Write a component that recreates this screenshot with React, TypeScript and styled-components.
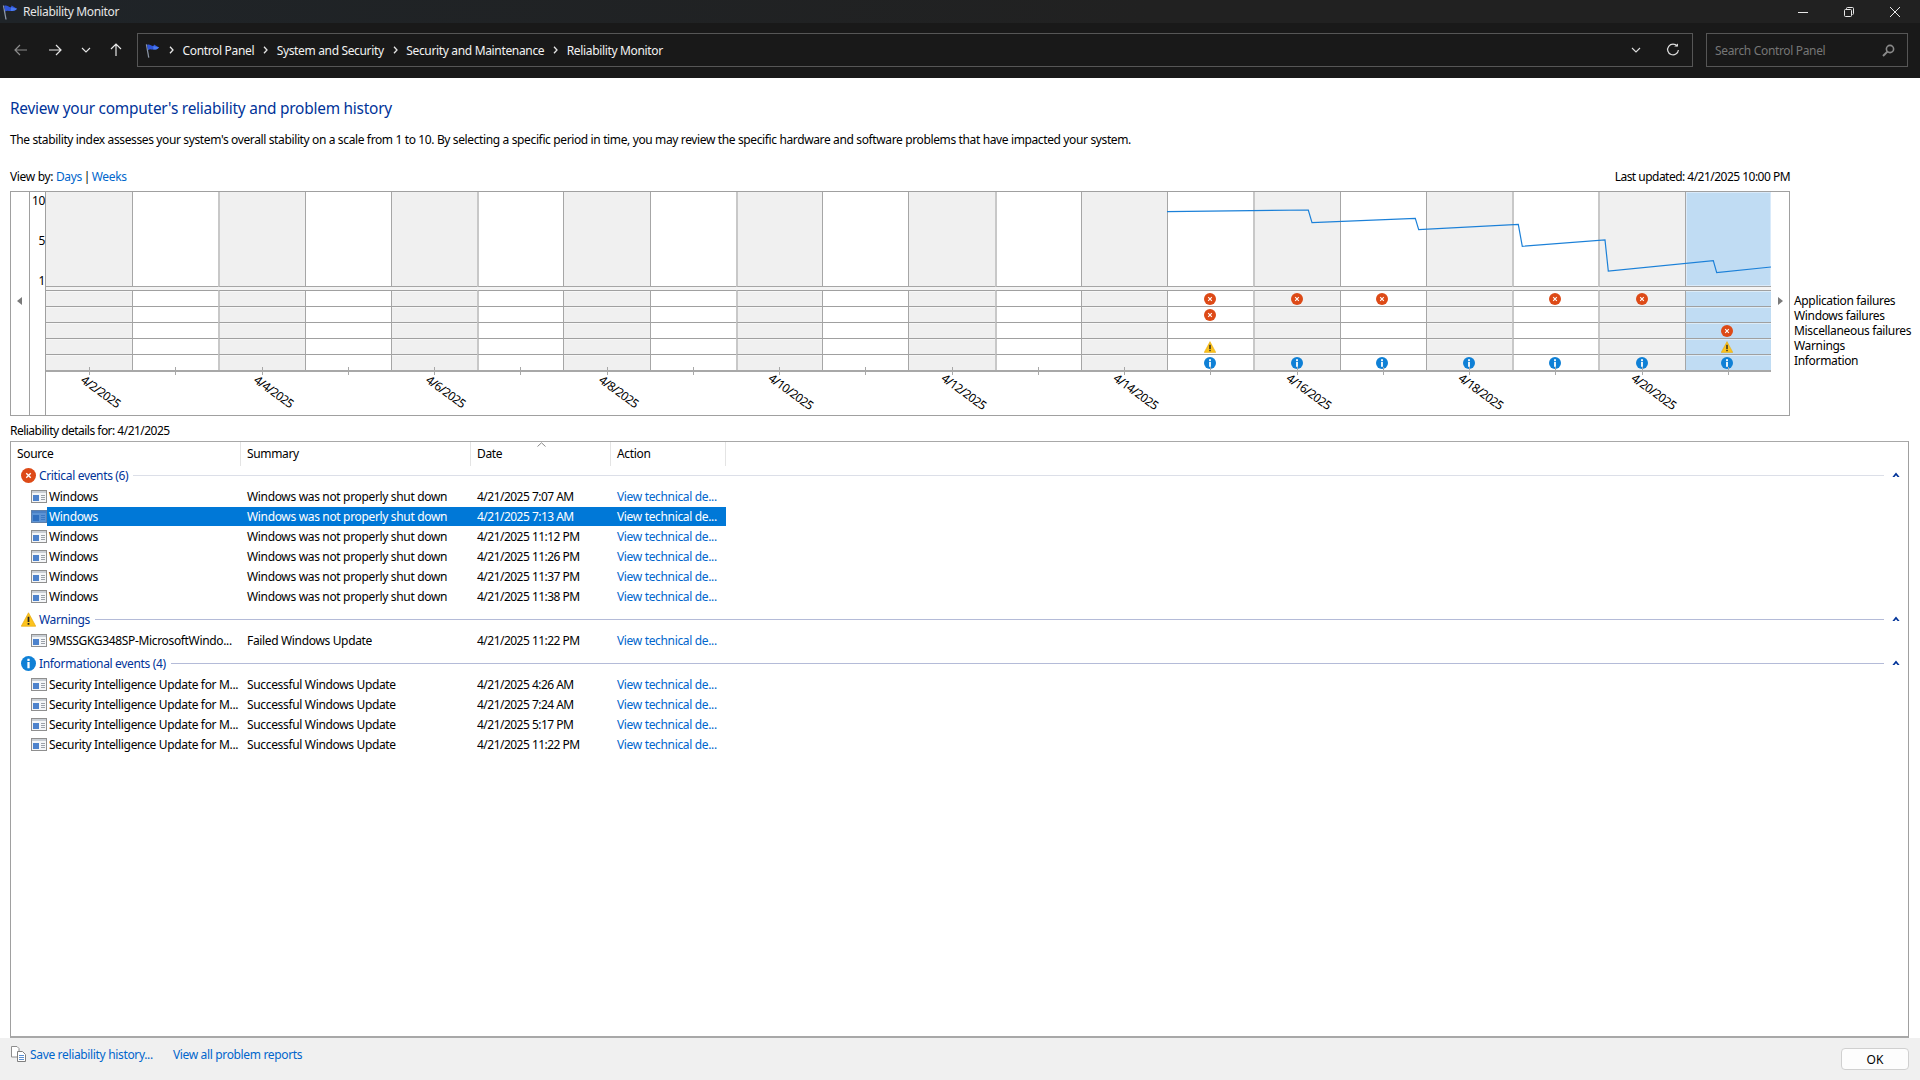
import React from 'react'
import styled, { createGlobalStyle } from 'styled-components'

const GlobalStyle = createGlobalStyle`
	html, body {
		margin: 0;
		padding: 0;
		height: 100%;
		background: #fff;
	}
	body {
		font-family: 'Noto Sans', 'Open Sans', sans-serif;
		font-size: 12px;
		letter-spacing: -0.34px;
		color: #000;
		overflow: hidden;
	}
	* {
		box-sizing: border-box;
	}
`

const Window = styled.div`
	width: 1920px;
	height: 1080px;
	display: flex;
	flex-direction: column;
`

// Тёмная шапка окна
const TitleBar = styled.div`
	height: 23px;
	display: flex;
	align-items: center;
	padding-left: 2px;
	background: linear-gradient(90deg, #1f2428, #212121 60%);
	color: #e6e6e6;
`

const TitleText = styled.span`
	margin-left: 5px;
	flex: 1;
`

const WindowButton = styled.div`
	width: 46px;
	height: 23px;
	display: flex;
	align-items: center;
	justify-content: center;
	color: #e8e8e8;
	&:last-child {
		margin-right: 2px;
	}
`

const Toolbar = styled.div`
	height: 55px;
	display: flex;
	align-items: center;
	padding: 0 12px 1px 4px;
	background: #191919;
	color: #eee;
`

const NavButton = styled.div<{ $width: number; $dim?: boolean }>`
	width: ${(p) => p.$width}px;
	display: flex;
	justify-content: center;
	color: ${(p) => (p.$dim ? '#8c8c8c' : '#e6e6e6')};
`

const AddressBar = styled.div`
	flex: 1;
	height: 34px;
	margin-left: 6px;
	padding-left: 7px;
	display: flex;
	align-items: center;
	border: 1px solid #565656;
	color: #f2f2f2;
`

const CrumbSeparator = styled.span`
	width: 22.5px;
	display: flex;
	justify-content: center;
`

const AddressTools = styled.div`
	margin-left: auto;
	display: flex;
	align-items: center;
`

const AddressTool = styled.div<{ $width: number }>`
	width: ${(p) => p.$width}px;
	display: flex;
	justify-content: center;
	color: #ddd;
`

const SearchBox = styled.div`
	width: 202px;
	height: 34px;
	margin-left: 13px;
	padding: 0 12px 0 8px;
	display: flex;
	align-items: center;
	justify-content: space-between;
	border: 1px solid #565656;
	color: #767676;
`

const Main = styled.main`
	flex: 1;
	min-height: 0;
	display: flex;
	flex-direction: column;
	padding: 0 11px 0 10px;
`

const Heading = styled.h1`
	margin: 21px 0 0;
	height: 20px;
	line-height: 20px;
	font-size: 15.4px;
	font-weight: 400;
	letter-spacing: -0.22px;
	color: #003399;
`

const Description = styled.p`
	margin: 12px 0 0;
	height: 18px;
	line-height: 18px;
	letter-spacing: -0.37px;
`

const ViewRow = styled.div`
	margin-top: 19px;
	width: 1780px;
	height: 18px;
	line-height: 18px;
	display: flex;
	justify-content: space-between;
`

const Link = styled.span`
	color: #0066cc;
`

const ViewSeparator = styled.span`
	margin: 0 -1px;
`

const DateText = styled.span`
	letter-spacing: -0.52px;
`

const ChartRow = styled.div`
	margin-top: 5px;
	display: flex;
`

const ChartFrame = styled.div`
	width: 1780px;
	height: 225px;
	display: flex;
	border: 1px solid #a0a0a0;
`

const ScrollColumn = styled.div<{ $side: 'left' | 'right' }>`
	width: ${(p) => (p.$side === 'left' ? 19 : 18)}px;
	display: flex;
	align-items: flex-start;
	justify-content: center;
	padding-top: 105px;
	color: #7a7a7a;
	${(p) => (p.$side === 'left' ? 'border-right: 1px solid #a0a0a0;' : 'padding-left: 1px;')}
`

const ScaleColumn = styled.div`
	width: 16px;
	height: 94px;
	margin-top: 2px;
	display: flex;
	flex-direction: column;
	justify-content: space-between;
	align-items: flex-end;
	padding-right: 1px;
	line-height: 14px;
`

const ScaleWrap = styled.div`
	width: 16px;
	border-right: 1px solid #a0a0a0;
`

const Plot = styled.div`
	position: relative;
	width: 1726px;
	display: grid;
	grid-template-columns: repeat(20, 1fr);
`

const DayColumn = styled.div`
	display: flex;
	flex-direction: column;
	&:first-child > * {
		border-left: none;
	}
	&:last-child > * {
		border-right: 1px solid #a0a0a0;
	}
`

const StabilityCell = styled.div<{ $tone: string; $wide: boolean }>`
	height: 95px;
	background: ${(p) => p.$tone};
	border-bottom: 1px solid #a6a6a6;
	border-left: ${(p) => (p.$wide ? '2px solid #c8c8c8' : '1px solid #a6a6a6')};
`

const SelectedFill = styled.div`
	height: 100%;
	box-shadow: inset 0 0 0 1px #d9eafa;
`

const MarkerGap = styled.div`
	height: 3px;
	background: #f4f4f4;
`

const MarkerCell = styled.div<{ $tone: string; $wide: boolean }>`
	height: 16px;
	padding-right: 2px;
	display: flex;
	align-items: center;
	justify-content: center;
	background: ${(p) => p.$tone};
	border-top: 1px solid #a0a0a0;
	border-left: ${(p) => (p.$wide ? '2px solid #c8c8c8' : '1px solid #a6a6a6')};
	box-shadow: inset 0 1px 0 rgba(255, 255, 255, 0.45);
`

const AxisCell = styled.div`
	position: relative;
	flex: 1;
	border-top: 2px solid #a8a8a8;
`

const AxisTick = styled.span`
	position: absolute;
	left: 50%;
	top: -5px;
	width: 1px;
	height: 8px;
	background: #a8a8a8;
`

const AxisLabel = styled.span`
	position: absolute;
	left: 50%;
	top: 11px;
	margin-left: 12px;
	white-space: nowrap;
	letter-spacing: -0.6px;
	transform: translateX(-50%) rotate(36deg);
`

const StabilityLine = styled.svg`
	position: absolute;
	left: 0;
	top: 0;
	pointer-events: none;
`

const Legend = styled.ul`
	margin: 102px 0 0 4px;
	padding: 0;
	list-style: none;
	line-height: 15px;
	white-space: nowrap;
`

const DetailsTitle = styled.div`
	margin-top: 6px;
	height: 18px;
	line-height: 18px;
`

const DetailsPanel = styled.section`
	margin-top: 1px;
	flex: 1;
	min-height: 0;
	border: 1px solid #a0a0a0;
	border-top-color: #a8a8a8;
	border-bottom: 2px solid #a8a8a8;
`

const ColumnsHeader = styled.div`
	position: relative;
	height: 24px;
	display: grid;
	grid-template-columns: 230px 230px 140px 115px;
	width: 715px;
`

const HeaderCell = styled.div`
	height: 24px;
	line-height: 24px;
	padding-left: 6px;
	border-right: 1px solid #e4e4e4;
`

const SortCaret = styled.svg`
	position: absolute;
	left: 526px;
	top: 0;
`

const Group = styled.div`
	& + & {
		margin-top: 4px;
	}
`

const GroupHeader = styled.div`
	height: 18px;
	margin-bottom: 2px;
	padding: 0 8px 0 10px;
	display: flex;
	align-items: center;
	color: #003399;
`

const GroupName = styled.span`
	margin-left: 3px;
	white-space: nowrap;
`

const GroupRule = styled.span<{ $light?: boolean }>`
	flex: 1;
	height: 1px;
	margin: 0 8px 0 5px;
	background: ${(p) => (p.$light ? '#dcdfe8' : '#b4bbd8')};
`

const EventRow = styled.div`
	height: 20px;
	display: flex;
`

const RowIcon = styled.div`
	width: 36px;
	padding: 4px 0 0 20px;
	line-height: 0;
`

const RowBody = styled.div<{ $selected?: boolean }>`
	width: 679px;
	height: 19px;
	margin-top: 1px;
	line-height: 19px;
	display: grid;
	grid-template-columns: 194px 230px 140px 115px;
	white-space: nowrap;
	background: ${(p) => (p.$selected ? '#0078d7' : 'transparent')};
	color: ${(p) => (p.$selected ? '#fff' : '#000')};
`

const SourceCell = styled.div`
	padding-left: 2px;
`

const TextCell = styled.div`
	padding-left: 6px;
`

const ActionCell = styled.div<{ $selected?: boolean }>`
	padding-left: 6px;
	color: ${(p) => (p.$selected ? '#fff' : '#0066cc')};
`

const Footer = styled.footer`
	height: 42px;
	display: flex;
	align-items: flex-start;
	padding: 8px 11px 0 11px;
	background: #f0f0f0;
`

const FooterLink = styled(Link)<{ $gap: number }>`
	margin-left: ${(p) => p.$gap}px;
	line-height: 18px;
`

const OkButton = styled.button`
	width: 68px;
	height: 22px;
	margin: 2px 0 0 auto;
	padding: 0;
	border: 1px solid #d0d0d0;
	border-radius: 4px;
	background: #fdfdfd;
	font: inherit;
	color: #000;
`

const FlagIcon = ({ size = 16 }: { size?: number }) => (
	<svg width={size} height={size} viewBox="0 0 16 16">
		<path d="M1.5 1.5 L4 15.5" stroke="#8d98a8" strokeWidth="1.3" fill="none" />
		<path d="M2.2 2 C5 0.5 7 3.8 9 3.2 L9.6 1.6 L15 4.8 C12.6 7.6 10.5 6.8 8.8 7 C6.8 7.2 5 6 3.2 7.6 Z" fill="#2f55d8" />
		<path d="M9 3.2 L8.8 7 C10.5 6.8 12.6 7.6 15 4.8 Z" fill="#4a7bf0" />
	</svg>
)

const ArrowIcon = ({ dir }: { dir: 'left' | 'right' | 'up' }) => {
	const rotate = dir === 'left' ? 180 : dir === 'up' ? -90 : 0
	return (
		<svg width="14" height="14" viewBox="0 0 14 14" style={{ transform: `rotate(${rotate}deg)` }}>
			<path d="M1 7 H13 M8 2 L13 7 L8 12" stroke="currentColor" strokeWidth="1.2" fill="none" />
		</svg>
	)
}

const ChevronDown = () => (
	<svg width="10" height="6" viewBox="0 0 10 6">
		<path d="M1 1 L5 5 L9 1" stroke="currentColor" strokeWidth="1.1" fill="none" />
	</svg>
)

const ChevronRight = () => (
	<svg width="5" height="8" viewBox="0 0 5 8">
		<path d="M1 0.8 L4 4 L1 7.2" stroke="#e6e6e6" strokeWidth="1.3" fill="none" />
	</svg>
)

const RefreshIcon = () => (
	<svg width="14" height="14" viewBox="0 0 14 14">
		<path d="M11.3 3.2 A5.4 5.4 0 1 0 12.4 7" stroke="currentColor" strokeWidth="1.2" fill="none" />
		<path d="M8.2 3.6 H12 V0.4 Z" fill="currentColor" />
	</svg>
)

const SearchIcon = () => (
	<svg width="13" height="13" viewBox="0 0 13 13">
		<circle cx="8" cy="5" r="3.6" stroke="#8a8a8a" strokeWidth="1.6" fill="none" />
		<path d="M5.4 7.6 L1 12" stroke="#8a8a8a" strokeWidth="2" />
	</svg>
)

const MinimizeIcon = () => (
	<svg width="10" height="10" viewBox="0 0 10 10">
		<path d="M0 5.5 H10" stroke="currentColor" strokeWidth="1" />
	</svg>
)

const RestoreIcon = () => (
	<svg width="10" height="10" viewBox="0 0 10 10">
		<rect x="0.5" y="2.5" width="7" height="7" rx="1" stroke="currentColor" fill="none" />
		<path d="M2.5 2.5 V1.5 Q2.5 0.5 3.5 0.5 H8.5 Q9.5 0.5 9.5 1.5 V6.5 Q9.5 7.5 8.5 7.5" stroke="currentColor" fill="none" />
	</svg>
)

const CloseIcon = () => (
	<svg width="10" height="10" viewBox="0 0 10 10">
		<path d="M0 0 L10 10 M10 0 L0 10" stroke="currentColor" strokeWidth="1" />
	</svg>
)

const ErrorIcon = ({ size = 12 }: { size?: number }) => (
	<svg width={size} height={size} viewBox="0 0 12 12">
		<circle cx="6" cy="6" r="6" fill="#dd4a17" />
		<path d="M4.2 4.2 L7.8 7.8 M7.8 4.2 L4.2 7.8" stroke="#fff" strokeWidth="1.1" />
	</svg>
)

const WarningIcon = ({ size = 12 }: { size?: number }) => (
	<svg width={size} height={size} viewBox="0 0 12 12">
		<path d="M6 0.6 L11.8 11.4 H0.2 Z" fill="#fcc31e" stroke="#e6a400" strokeWidth="0.5" strokeLinejoin="round" />
		<rect x="5.3" y="3.8" width="1.4" height="4.2" fill="#222" />
		<rect x="5.3" y="8.8" width="1.4" height="1.4" fill="#222" />
	</svg>
)

const InfoIcon = ({ size = 12 }: { size?: number }) => (
	<svg width={size} height={size} viewBox="0 0 12 12">
		<circle cx="6" cy="6" r="6" fill="#0f80d6" />
		<rect x="5.1" y="4.8" width="1.8" height="5" fill="#fff" />
		<rect x="5.1" y="2.2" width="1.8" height="1.8" fill="#fff" />
	</svg>
)

const ListItemIcon = ({ selected }: { selected?: boolean }) => (
	<svg width="16" height="13" viewBox="0 0 16 13">
		<rect x="0.5" y="0.5" width="15" height="12" fill={selected ? '#5c93d4' : '#f4f6f8'} stroke={selected ? '#5f7fa8' : '#8f8f8f'} />
		<rect x="1" y="1" width="14" height="2" fill={selected ? '#4a80c4' : '#c9ced4'} />
		<rect x="2" y="5" width="6" height="6" fill={selected ? '#2f6fc0' : '#4d82cc'} />
		<path d="M10 5.5 H14 M10 7.5 H14 M10 9.5 H14" stroke={selected ? '#3c78c4' : '#9aa0a8'} />
	</svg>
)

const CopyIcon = () => (
	<svg width="15" height="16" viewBox="0 0 15 16">
		<path d="M0.5 0.5 H6 L8 2.5 V11 H0.5 Z" fill="#fff" stroke="#8e8e8e" />
		<path d="M6.5 5.5 H11.5 L14.5 8.5 V15.5 H6.5 Z" fill="#fff" stroke="#7f7f7f" />
		<path d="M8 9.5 H13 M8 11.5 H13 M8 13.5 H13" stroke="#5b8fd0" />
	</svg>
)

const CollapseCaret = () => (
	<svg width="8" height="6" viewBox="0 0 8 6">
		<path d="M4 0.5 L7.6 5 H5.6 L4 3.2 L2.4 5 H0.4 Z" fill="#003399" />
	</svg>
)

const TriangleLeft = () => (
	<svg width="5" height="8" viewBox="0 0 5 8">
		<path d="M5 0 V8 L0 4 Z" fill="currentColor" />
	</svg>
)

const TriangleRight = () => (
	<svg width="5" height="8" viewBox="0 0 5 8">
		<path d="M0 0 V8 L5 4 Z" fill="currentColor" />
	</svg>
)

type Marker = 'error' | 'warning' | 'info' | null

// Отметки по строкам: индекс дня -> тип значка
const markerRows: Record<number, Marker>[] = [
	{ 13: 'error', 14: 'error', 15: 'error', 17: 'error', 18: 'error' },
	{ 13: 'error' },
	{ 19: 'error' },
	{ 13: 'warning', 19: 'warning' },
	{ 13: 'info', 14: 'info', 15: 'info', 16: 'info', 17: 'info', 18: 'info', 19: 'info' },
]

const days = Array.from({ length: 20 }, (_, i) => i)

const linePoints = [
	[1167, 211.7],
	[1308.3, 210],
	[1312, 222.7],
	[1415.3, 218.3],
	[1418.7, 229.7],
	[1518.3, 224.3],
	[1522.3, 246.3],
	[1605, 240],
	[1608.3, 271],
	[1713.3, 260.7],
	[1716.7, 272.7],
	[1771, 267],
]

const markerIcon = (type: Marker) => {
	if (type === 'error') return <ErrorIcon />
	if (type === 'warning') return <WarningIcon />
	if (type === 'info') return <InfoIcon />
	return null
}

const toneOf = (day: number) => (day === 19 ? '#c0dcf3' : day % 2 === 0 ? '#f0f0f0' : '#fff')

const criticalTimes = ['7:07 AM', '7:13 AM', '11:12 PM', '11:26 PM', '11:37 PM', '11:38 PM']
const infoTimes = ['4:26 AM', '7:24 AM', '5:17 PM', '11:22 PM']

interface EventItem {
	source: string
	summary: string
	date: string
	selected?: boolean
}

const groups: { name: string; icon: React.ReactNode; light?: boolean; items: EventItem[] }[] = [
	{
		name: 'Critical events (6)',
		icon: <ErrorIcon size={15} />,
		light: true,
		items: criticalTimes.map((t, i) => ({
			source: 'Windows',
			summary: 'Windows was not properly shut down',
			date: `4/21/2025 ${t}`,
			selected: i === 1,
		})),
	},
	{
		name: 'Warnings',
		icon: <WarningIcon size={15} />,
		items: [{ source: '9MSSGKG348SP-MicrosoftWindo...', summary: 'Failed Windows Update', date: '4/21/2025 11:22 PM' }],
	},
	{
		name: 'Informational events (4)',
		icon: <InfoIcon size={15} />,
		items: infoTimes.map((t) => ({
			source: 'Security Intelligence Update for M...',
			summary: 'Successful Windows Update',
			date: `4/21/2025 ${t}`,
		})),
	},
]

const crumbs = ['Control Panel', 'System and Security', 'Security and Maintenance', 'Reliability Monitor']

const Chart = () => (
	<ChartFrame>
		<ScrollColumn $side="left">
			<TriangleLeft />
		</ScrollColumn>
		<ScaleWrap>
			<ScaleColumn>
				<span>10</span>
				<span>5</span>
				<span>1</span>
			</ScaleColumn>
		</ScaleWrap>
		<Plot>
			{days.map((day) => {
				const wide = day % 3 === 2 || day === 18
				return (
					<DayColumn key={day}>
						<StabilityCell $tone={toneOf(day)} $wide={wide}>
							{day === 19 && <SelectedFill />}
						</StabilityCell>
						<MarkerGap />
						{markerRows.map((row, r) => (
							<MarkerCell key={r} $tone={toneOf(day)} $wide={wide}>
								{markerIcon(row[day] ?? null)}
							</MarkerCell>
						))}
						<AxisCell>
							<AxisTick />
							{day % 2 === 0 && day < 19 && <AxisLabel>4/{day + 2}/2025</AxisLabel>}
						</AxisCell>
					</DayColumn>
				)
			})}
			<StabilityLine width="1726" height="100" viewBox="46 192 1726 100">
				<polyline
					points={linePoints.map((p) => p.join(',')).join(' ')}
					fill="none"
					stroke="#1b80d8"
					strokeWidth="1.2"
				/>
			</StabilityLine>
		</Plot>
		<ScrollColumn $side="right">
			<TriangleRight />
		</ScrollColumn>
	</ChartFrame>
)

const App = () => (
	<Window>
		<GlobalStyle />
		<TitleBar>
			<FlagIcon />
			<TitleText>Reliability Monitor</TitleText>
			<WindowButton>
				<MinimizeIcon />
			</WindowButton>
			<WindowButton>
				<RestoreIcon />
			</WindowButton>
			<WindowButton>
				<CloseIcon />
			</WindowButton>
		</TitleBar>
		<Toolbar>
			<NavButton $width={34} $dim>
				<ArrowIcon dir="left" />
			</NavButton>
			<NavButton $width={34}>
				<ArrowIcon dir="right" />
			</NavButton>
			<NavButton $width={28}>
				<ChevronDown />
			</NavButton>
			<NavButton $width={31}>
				<ArrowIcon dir="up" />
			</NavButton>
			<AddressBar>
				<FlagIcon size={15} />
				{crumbs.map((crumb) => (
					<React.Fragment key={crumb}>
						<CrumbSeparator>
							<ChevronRight />
						</CrumbSeparator>
						<span>{crumb}</span>
					</React.Fragment>
				))}
				<AddressTools>
					<AddressTool $width={36}>
						<ChevronDown />
					</AddressTool>
					<AddressTool $width={38}>
						<RefreshIcon />
					</AddressTool>
				</AddressTools>
			</AddressBar>
			<SearchBox>
				<span>Search Control Panel</span>
				<SearchIcon />
			</SearchBox>
		</Toolbar>
		<Main>
			<Heading>Review your computer's reliability and problem history</Heading>
			<Description>
				The stability index assesses your system's overall stability on a scale from 1 to 10. By selecting a
				specific period in time, you may review the specific hardware and software problems that have impacted your
				system.
			</Description>
			<ViewRow>
				<span>
					View by: <Link>Days</Link> <ViewSeparator>|</ViewSeparator> <Link>Weeks</Link>
				</span>
				<DateText>Last updated: 4/21/2025 10:00 PM</DateText>
			</ViewRow>
			<ChartRow>
				<Chart />
				<Legend>
					<li>Application failures</li>
					<li>Windows failures</li>
					<li>Miscellaneous failures</li>
					<li>Warnings</li>
					<li>Information</li>
				</Legend>
			</ChartRow>
			<DetailsTitle>
				<DateText>Reliability details for: 4/21/2025</DateText>
			</DetailsTitle>
			<DetailsPanel>
				<ColumnsHeader>
					<HeaderCell>Source</HeaderCell>
					<HeaderCell>Summary</HeaderCell>
					<HeaderCell>Date</HeaderCell>
					<HeaderCell>Action</HeaderCell>
					<SortCaret width="9" height="5" viewBox="0 0 9 5">
						<path d="M0.5 4.5 L4.5 0.8 L8.5 4.5" stroke="#8a8a8a" fill="none" />
					</SortCaret>
				</ColumnsHeader>
				{groups.map((group) => (
					<Group key={group.name}>
						<GroupHeader>
							{group.icon}
							<GroupName>{group.name}</GroupName>
							<GroupRule $light={group.light} />
							<CollapseCaret />
						</GroupHeader>
						{group.items.map((item) => (
							<EventRow key={item.date}>
								<RowIcon>
									<ListItemIcon selected={item.selected} />
								</RowIcon>
								<RowBody $selected={item.selected}>
									<SourceCell>{item.source}</SourceCell>
									<TextCell>{item.summary}</TextCell>
									<TextCell>
										<DateText>{item.date}</DateText>
									</TextCell>
									<ActionCell $selected={item.selected}>View technical de...</ActionCell>
								</RowBody>
							</EventRow>
						))}
					</Group>
				))}
			</DetailsPanel>
		</Main>
		<Footer>
			<CopyIcon />
			<FooterLink $gap={4}>Save reliability history...</FooterLink>
			<FooterLink $gap={20}>View all problem reports</FooterLink>
			<OkButton>OK</OkButton>
		</Footer>
	</Window>
)

export default App
